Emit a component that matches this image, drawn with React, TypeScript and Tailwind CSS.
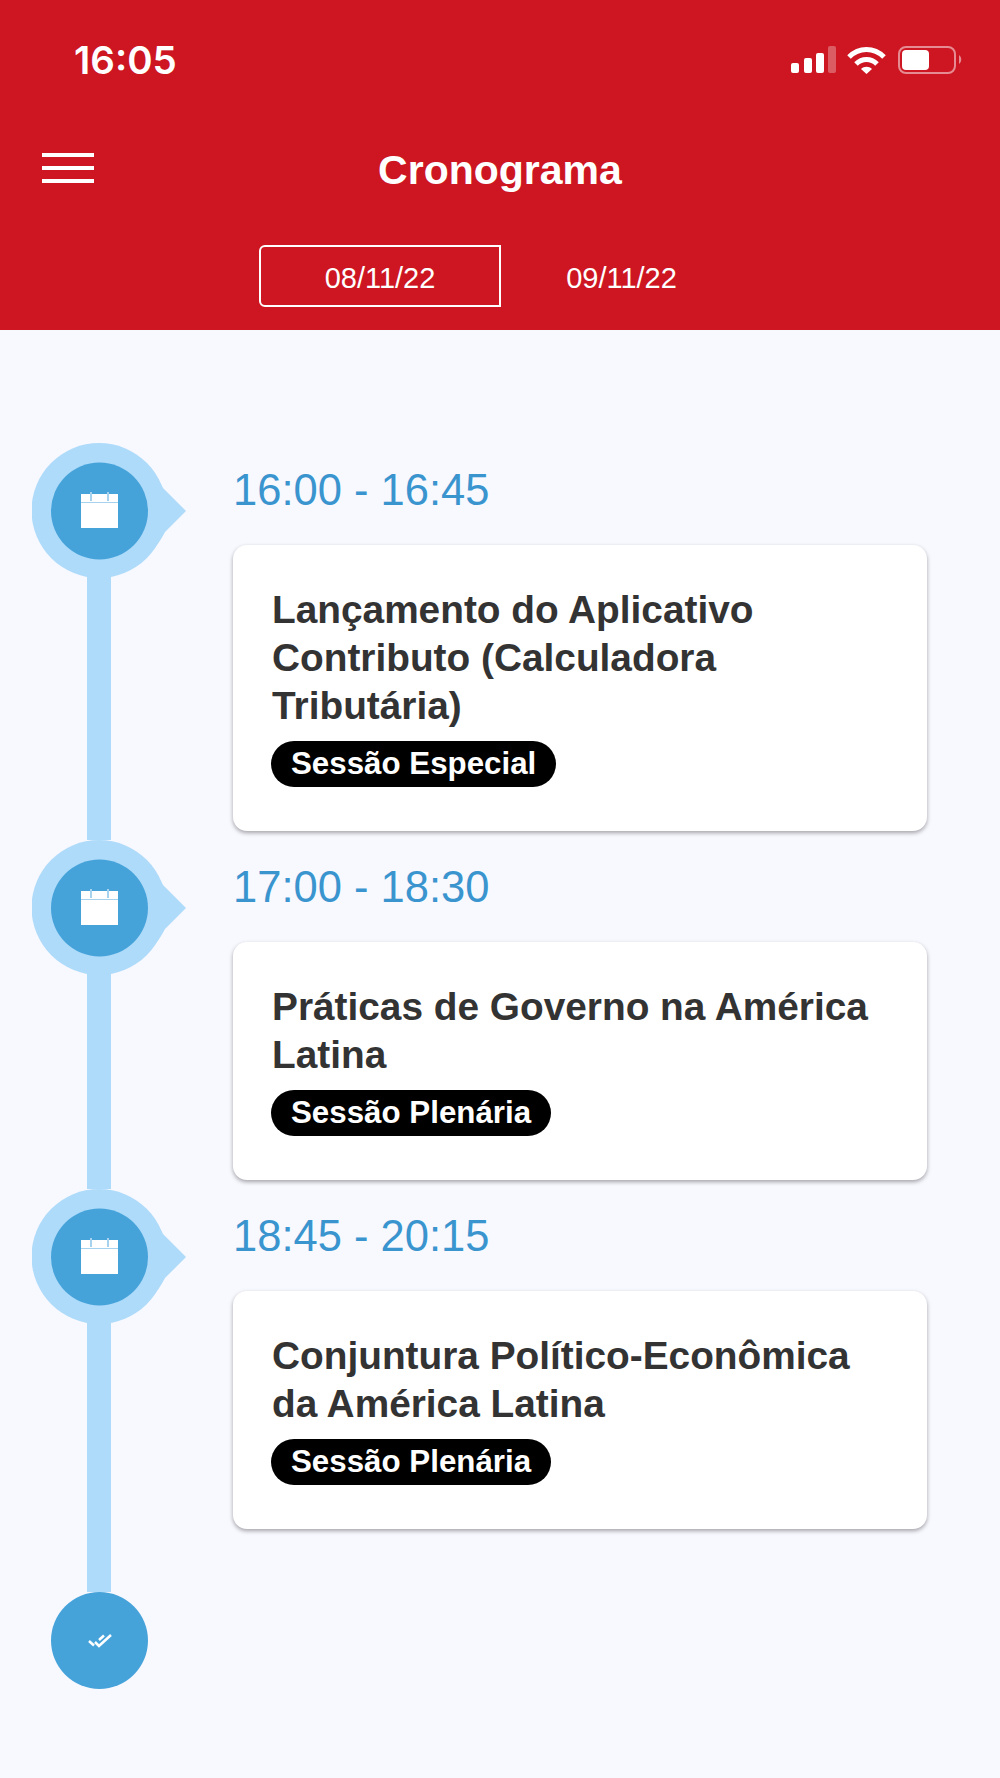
const sans = "font-['Liberation_Sans',Arial,sans-serif]";

function Pin() {
  return (
    <svg width="156" height="135" viewBox="0 0 156 135" className="block shrink-0">
      <circle cx="67" cy="67.5" r="67.5" fill="#aedbfa" />
      <path d="M118 26 C124 33 128 39 131 45 L154 68 L133 89 C129 97 124 104 118 110 Z" fill="#aedbfa" />
      <circle cx="67.5" cy="68" r="48.5" fill="#46a3da" />
      <rect x="49" y="51" width="37" height="34" fill="#fff" />
      <rect x="58" y="49" width="2" height="9" fill="#a6d2ee" />
      <rect x="75" y="49" width="2" height="9" fill="#a6d2ee" />
      <rect x="49" y="59" width="37" height="1" fill="#a6d2ee" />
    </svg>
  );
}

function Event({ time, title, tag, last }: { time: string; title: string[]; tag: string; last?: boolean }) {
  return (
    <div className="flex">
      <div className="w-[201px] shrink-0 flex flex-col">
        <Pin />
        <div className="w-6 flex-1 ml-[55px] -mt-[1px] bg-[#aedbfa]" />
      </div>
      <div className={last ? "w-[694px] pb-[63px]" : "w-[694px] pb-[9px]"}>
        <div className="h-[102px] pt-[18px] text-[43.5px] leading-[58px] text-[#3a95cf]">{time}</div>
        <div className="rounded-[14px] bg-white pl-[39px] pr-[30px] pt-[41px] pb-[44px] shadow-[0_2px_4px_rgba(0,0,0,0.35)]">
          <div className="text-[38.8px] leading-[48px] font-bold text-[#333333]">
            {title.map((t) => (
              <div key={t}>{t}</div>
            ))}
          </div>
          <div className="mt-[11px] -ml-[1px] inline-block align-top h-[46px] rounded-full bg-black px-5 text-[31.3px] leading-[46px] font-bold text-white">
            {tag}
          </div>
        </div>
      </div>
    </div>
  );
}

export default function App() {
  return (
    <div className={`w-[1000px] h-[1778px] bg-[#f8f8ff] overflow-hidden ${sans}`}>
      <header className="h-[330px] bg-[#cd1622] text-white flex flex-col">
        <div className="h-[121px] pt-[38px] pl-[74px] pr-[37px] flex items-start justify-between">
          <span className="font-['Inter',sans-serif] text-[38.5px] leading-[44px] font-semibold">16:05</span>
          <svg width="172" height="29" viewBox="0 0 172 29" className="mt-[8px]" fill="none">
            <rect x="0" y="17" width="8" height="10" rx="2" fill="#fff" />
            <rect x="13" y="12" width="8" height="15" rx="2" fill="#fff" />
            <rect x="25" y="7" width="8" height="20" rx="2" fill="#fff" />
            <rect x="37" y="0" width="8" height="27" rx="2" fill="#fff" fillOpacity="0.3" />
            <path d="M58 11 C68 1 83 1 93 11" stroke="#fff" strokeWidth="5" />
            <path d="M65 18 C71 12 80 12 86 18" stroke="#fff" strokeWidth="5" />
            <path d="M70 23 C73 20 78 20 81 23 L75.5 28 Z" fill="#fff" />
            <rect x="108" y="1" width="56" height="26" rx="7" stroke="#fff" strokeOpacity="0.5" strokeWidth="2" />
            <rect x="111" y="4" width="27" height="20" rx="4" fill="#fff" />
            <path d="M168 9 C171 11 171 16 168 18 Z" fill="#fff" fillOpacity="0.5" />
          </svg>
        </div>
        <div className="relative h-[58px] flex items-center justify-center">
          <div className="absolute left-[42px] top-[32px] w-[52px] flex flex-col gap-[9px]">
            <div className="h-[4px] bg-white" />
            <div className="h-[4px] bg-white" />
            <div className="h-[4px] bg-white" />
          </div>
          <h1 className="text-[41px] leading-[58px] font-bold relative top-[20px]">Cronograma</h1>
        </div>
        <div className="mt-[66px] flex justify-center pl-[1px]">
          <div className="w-[242px] h-[62px] border-2 border-white rounded-l-[6px] flex items-center justify-center text-[29px] pt-[6px]">
            08/11/22
          </div>
          <div className="w-[241px] h-[62px] flex items-center justify-center text-[29px] pt-[6px]">09/11/22</div>
        </div>
      </header>
      <main className="pt-[113px] pl-[32px]">
        <Event time="16:00 - 16:45" title={["Lançamento do Aplicativo", "Contributo (Calculadora", "Tributária)"]} tag="Sessão Especial" />
        <Event time="17:00 - 18:30" title={["Práticas de Governo na América", "Latina"]} tag="Sessão Plenária" />
        <Event time="18:45 - 20:15" title={["Conjuntura Político-Econômica", "da América Latina"]} tag="Sessão Plenária" last />
        <div className="ml-[19px] w-[97px] h-[97px] rounded-full bg-[#46a3da] flex items-center justify-center">
          <svg width="26" height="16" viewBox="0 0 26 16" fill="none" stroke="#fff" strokeWidth="2.5">
            <path d="M2 8 L7 12.5" />
            <path d="M8 9 L12 13 L24 2" />
            <path d="M12 7 L17 2.5" />
          </svg>
        </div>
      </main>
    </div>
  );
}
